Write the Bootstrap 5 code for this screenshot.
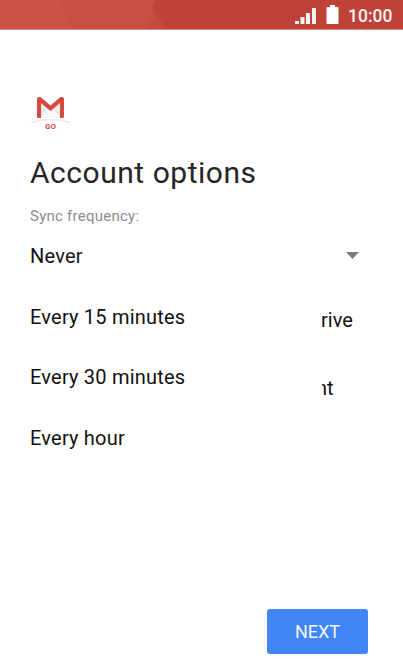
<!DOCTYPE html>
<html lang="en">
<head>
<meta charset="utf-8">
<meta name="viewport" content="width=device-width, initial-scale=1">
<title>Account options</title>
<link rel="stylesheet" href="https://cdn.jsdelivr.net/npm/bootstrap@5.3.0/dist/css/bootstrap.min.css">
<style>
body { font-family: Roboto, "Liberation Sans", sans-serif; color: #111; background: #fff; }
.screen { height: 672px; }
.statusbar { height: 30px; background: #be4238; border-bottom: 1px solid #d98c85; }
.statusbar-art { width: 403px; height: 29px; }
.clock { font-size: 17.5px; line-height: 30px; font-weight: 500; right: 10.5px; top: 1px; color: #fff4f2; }
.signal { right: 86px; top: 7px; }
.battery { right: 64px; top: 5px; }
.content { padding: 63px 35px 0 30px; }
.logo { width: 41px; height: 38px; }
.title { font-size: 30px; line-height: 36px; margin-top: 24px; color: #262626; letter-spacing: .53px; }
.hint { font-size: 15px; line-height: 18px; margin-top: 16px; color: #8b8b8b; letter-spacing: .25px; }
.field { height: 60px; margin-top: 0; }
.caret { width: 13px; height: 7px; margin-right: 9px; margin-top: 0; }
.opt { font-size: 20px; line-height: 24px; letter-spacing: .2px; }
.setting { padding-left: 286px; font-size: 20px; line-height: 24px; height: 68px; white-space: nowrap; }
.setting.drive { padding-top: 23px; padding-left: 291px; }
.setting.nt { padding-top: 23px; }
.options-menu { left: 0; top: 226px; width: 322px; padding-left: 30px; background: #fff; }
.options-menu .opt { height: 60.5px; padding: 0; display: flex; align-items: center; background: transparent; color: #111; border: 0; }
.next { width: 101px; height: 45px; margin: 0 35px 18px 0; border-radius: 3px; background: #4285f4; color: #f4f8ff; font-size: 18px; letter-spacing: 0; }
</style>
</head>
<body>
<div class="screen d-flex flex-column position-relative overflow-hidden">
  <header class="statusbar position-relative flex-shrink-0">
    <svg class="statusbar-art d-block" viewBox="0 0 403 29" preserveAspectRatio="none">
      <path fill="#c94f45" d="M0 0H155L148 29H0Z"/>
      <path fill="#cb5248" d="M0 0H61L72 29H0Z"/>
      <path fill="#c34b42" d="M154 0L147 29H166L152 8Z"/>
    </svg>
    <svg class="signal position-absolute" width="22" height="18" viewBox="0 0 22 18" fill="#fff" fill-opacity=".94"><path d="M0 14h4v3H0zM5.5 10h4v7h-4zM11 6h4v11h-4zM17 1h4v16h-4z"/></svg>
    <svg class="battery position-absolute" width="13" height="19" viewBox="0 0 13 19" fill="#fff"><path d="M4 0h5v2h2.5q1 0 1 1v15q0 1-1 1h-10q-1 0-1-1V3q0-1 1-1H4z"/></svg>
    <span class="clock position-absolute">10:00</span>
  </header>
  <main class="flex-grow-1">
    <div class="content pb-0">
      <svg class="logo d-block" viewBox="0 0 41 38">
        <path fill="#ececec" d="M8 5h25v20H8z"/>
        <path fill="#f7f7f7" d="M10 25l10.500-10L31 25z"/>
        <path fill="#fff" d="M10 5h21L20.500 14z"/>
        <path fill="#d5493f" d="M7 6q0-2 2-2h1.500l10 8.500 10-8.500H32q2 0 2 2v17.500q0 1.500-1.500 1.500H30V10l-9.500 8L11 10v15H8.500Q7 25 7 23.500z"/>
        <path fill="#fff" d="M0 30q20-8 41 0v8H0z"/>
        <path fill="none" stroke="#e2e2e2" d="M1 29.500q19.500-6 39 0"/>
        <text x="20.500" y="36" text-anchor="middle" font-family="Roboto, sans-serif" font-size="8" font-weight="700" fill="#d5493f">GO</text>
      </svg>
      <h1 class="title mb-0 fw-normal">Account options</h1>
      <div class="hint">Sync frequency:</div>
      <div class="field d-flex align-items-center justify-content-end">
        <svg class="caret" viewBox="0 0 13 7"><path fill="#7b7b7b" d="M0 0h13L6.500 7z"/></svg>
      </div>
      <div class="setting drive">rive</div>
      <div class="setting nt">nt</div>
    </div>
  </main>
  <div class="options-menu list-group rounded-0 position-absolute">
    <a class="opt list-group-item">Never</a>
    <a class="opt list-group-item">Every 15 minutes</a>
    <a class="opt list-group-item">Every 30 minutes</a>
    <a class="opt list-group-item">Every hour</a>
  </div>
  <footer class="d-flex justify-content-end">
    <button type="button" class="next btn border-0 p-0">NEXT</button>
  </footer>
</div>
<script src="https://cdn.jsdelivr.net/npm/bootstrap@5.3.0/dist/js/bootstrap.bundle.min.js"></script>
</body>
</html>
